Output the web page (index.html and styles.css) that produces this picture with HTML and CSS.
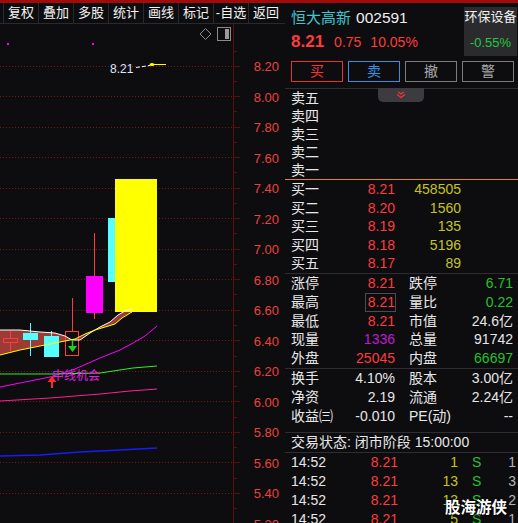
FILE: index.html
```html
<!DOCTYPE html>
<html lang="zh-CN">
<head>
<meta charset="utf-8">
<title>恒大高新 002591</title>
<link rel="stylesheet" href="styles.css">
</head>
<body>
<div class="topbar"></div>
<div class="main">
  <div class="left">
    <div class="toolbar">
      <div class="tb">复权</div><div class="tb">叠加</div><div class="tb">多股</div><div class="tb">统计</div><div class="tb">画线</div><div class="tb">标记</div><div class="tb">-自选</div><div class="tb">返回</div>
    </div>
    <div class="chart">
      <svg class="chart-svg" width="285" height="499" viewBox="0 24 285 499">
        <g class="grid" stroke="#7e1616" stroke-dasharray="1 2">
          <line x1="0" y1="66.5" x2="232" y2="66.5"/>
          <line x1="0" y1="96.5" x2="232" y2="96.5"/>
          <line x1="0" y1="127.5" x2="232" y2="127.5"/>
          <line x1="0" y1="157.5" x2="232" y2="157.5"/>
          <line x1="0" y1="188.5" x2="232" y2="188.5"/>
          <line x1="0" y1="218.5" x2="232" y2="218.5"/>
          <line x1="0" y1="249.5" x2="232" y2="249.5"/>
          <line x1="0" y1="279.5" x2="232" y2="279.5"/>
          <line x1="0" y1="310.5" x2="232" y2="310.5"/>
          <line x1="0" y1="340.5" x2="232" y2="340.5"/>
          <line x1="0" y1="371.5" x2="232" y2="371.5"/>
          <line x1="0" y1="401.5" x2="232" y2="401.5"/>
          <line x1="0" y1="432.5" x2="232" y2="432.5"/>
          <line x1="0" y1="462.5" x2="232" y2="462.5"/>
          <line x1="0" y1="493.5" x2="232" y2="493.5"/>
        </g>
        <g stroke="#5e0d0d">
          <line x1="233.5" y1="24" x2="233.5" y2="523"/>
          <line x1="233" y1="66.5" x2="240" y2="66.5"/><line x1="233" y1="96.5" x2="240" y2="96.5"/>
          <line x1="233" y1="127.5" x2="240" y2="127.5"/><line x1="233" y1="157.5" x2="240" y2="157.5"/>
          <line x1="233" y1="188.5" x2="240" y2="188.5"/><line x1="233" y1="218.5" x2="240" y2="218.5"/>
          <line x1="233" y1="249.5" x2="240" y2="249.5"/><line x1="233" y1="279.5" x2="240" y2="279.5"/>
          <line x1="233" y1="310.5" x2="240" y2="310.5"/><line x1="233" y1="340.5" x2="240" y2="340.5"/>
          <line x1="233" y1="371.5" x2="240" y2="371.5"/><line x1="233" y1="401.5" x2="240" y2="401.5"/>
          <line x1="233" y1="432.5" x2="240" y2="432.5"/><line x1="233" y1="462.5" x2="240" y2="462.5"/>
          <line x1="233" y1="493.5" x2="240" y2="493.5"/>
          <line x1="233" y1="51.5" x2="237" y2="51.5"/><line x1="233" y1="81.5" x2="237" y2="81.5"/>
          <line x1="233" y1="111.5" x2="237" y2="111.5"/><line x1="233" y1="142.5" x2="237" y2="142.5"/>
          <line x1="233" y1="172.5" x2="237" y2="172.5"/><line x1="233" y1="203.5" x2="237" y2="203.5"/>
          <line x1="233" y1="233.5" x2="237" y2="233.5"/><line x1="233" y1="264.5" x2="237" y2="264.5"/>
          <line x1="233" y1="294.5" x2="237" y2="294.5"/><line x1="233" y1="325.5" x2="237" y2="325.5"/>
          <line x1="233" y1="356.5" x2="237" y2="356.5"/><line x1="233" y1="386.5" x2="237" y2="386.5"/>
          <line x1="233" y1="417.5" x2="237" y2="417.5"/><line x1="233" y1="447.5" x2="237" y2="447.5"/>
          <line x1="233" y1="478.5" x2="237" y2="478.5"/><line x1="233" y1="508.5" x2="237" y2="508.5"/>
        </g>
        <g class="axis-labels" fill="#ea423c" font-size="13" text-anchor="end">
          <text x="279" y="71">8.20</text>
          <text x="279" y="101.5">8.00</text>
          <text x="279" y="132">7.80</text>
          <text x="279" y="162.5">7.60</text>
          <text x="279" y="193">7.40</text>
          <text x="279" y="223.5">7.20</text>
          <text x="279" y="254">7.00</text>
          <text x="279" y="284.5">6.80</text>
          <text x="279" y="315">6.60</text>
          <text x="279" y="345.5">6.40</text>
          <text x="279" y="376">6.20</text>
          <text x="279" y="406.5">6.00</text>
          <text x="279" y="437">5.80</text>
          <text x="279" y="467.5">5.60</text>
          <text x="279" y="498">5.40</text>
          <text x="279" y="528.5">5.20</text>
        </g>
        <!-- icons -->
        <rect x="7" y="43" width="2" height="2" fill="#ff00ff"/>
        <rect x="92" y="43" width="2" height="2" fill="#ff00ff"/>
        <polygon points="205.5,28.5 211,34 205.5,39.5 200,34" fill="none" stroke="#8a8a8a"/>
        <rect x="217.5" y="27.5" width="13" height="13" fill="none" stroke="#8a8a8a"/>
        <rect x="225" y="29" width="4" height="10" fill="#9a9a9a"/>
        <!-- last price marker -->
        <text x="110" y="73" font-size="12" fill="#dce6ff">8.21</text>
        <path d="M136 67.5 L150 65.5" stroke="#ffffff" stroke-dasharray="4 2"/>
        <ellipse cx="152" cy="64.5" rx="2.5" ry="1.6" fill="#ffff00"/>
        <line x1="154" y1="64.5" x2="166" y2="64.5" stroke="#ffff00"/>
        <!-- band fill -->
        <polygon fill="#9c3a35" points="0,330 20,330 40,332 55,333 65,336 72,340 80,340 90,333 100,327 110,322 118,315 125,311 132,309 132,312 122,318 115,324 105,327 95,330 85,334 75,339 65,341 55,343 40,346 20,350 0,355"/>
        <!-- candles -->
        <line x1="10.5" y1="331" x2="10.5" y2="351" stroke="#ff3c3c"/>
        <rect x="3.5" y="338.5" width="14" height="4" fill="#9c3a35" stroke="#ff3c3c"/>
        <line x1="30.5" y1="323" x2="30.5" y2="356" stroke="#55ffff"/>
        <rect x="23" y="333" width="15" height="7" fill="#55ffff"/>
        <line x1="51.5" y1="331" x2="51.5" y2="357" stroke="#55ffff"/>
        <rect x="44" y="336" width="15" height="21" fill="#55ffff"/>
        <line x1="72.5" y1="298" x2="72.5" y2="331" stroke="#ff3c3c"/>
        <rect x="65.5" y="331.5" width="13" height="24" fill="none" stroke="#ff3c3c"/>
        <line x1="94.5" y1="233" x2="94.5" y2="319" stroke="#ff3c3c"/>
        <rect x="86" y="276" width="17" height="37" fill="#ff00ff"/>
        <rect x="108" y="218" width="10" height="64" fill="#55ffff"/>
        <rect x="115" y="179" width="42" height="133" fill="#ffff00"/>
        <!-- moving averages -->
        <polyline fill="none" stroke="#ffffff" points="0,330 20,330 40,332 55,333 65,336 72,340 80,340 90,333 100,327 110,322 118,315 125,311 132,309"/>
        <polyline fill="none" stroke="#ffff00" points="0,355 20,350 40,346 55,343 65,341 75,339 85,334 95,330 105,327 115,324 122,318 132,312"/>
        <polyline fill="none" stroke="#ff00ff" points="0,387 25,382 50,377 75,369 100,358 120,350 133,343 145,336 157,326"/>
        <polyline fill="none" stroke="#33ee22" points="0,374 50,374 100,373 133,368 157,366"/>
        <polyline fill="none" stroke="#ff1f8f" points="0,401 50,398 100,394 130,391 157,389"/>
        <polyline fill="none" stroke="#1a1aff" stroke-width="1.3" points="0,456 40,455 80,452 120,450 157,448"/>
        <!-- signals -->
        <line x1="72.5" y1="340" x2="72.5" y2="346" stroke="#22d022" stroke-width="1.5"/>
        <polygon points="68,346 77,346 72.5,352" fill="#22d022"/>
        <text x="52" y="380" font-size="12" fill="#e020e0">中线机会</text>
        <polygon points="47.5,382 56.5,382 52,376" fill="#ff2a2a"/>
        <line x1="52" y1="381" x2="52" y2="388" stroke="#ff2a2a" stroke-width="2"/>
      </svg>
    </div>
  </div>

  <div class="right">
    <div class="head">
      <div class="head-info">
        <div class="title"><span class="name">恒大高新</span><span class="code">002591</span></div>
        <div class="quote"><span class="last">8.21</span><span class="chg">0.75</span><span class="pct">10.05%</span></div>
      </div>
      <div class="sector">
        <div class="sname">环保设备</div>
        <div class="schg">-0.55%</div>
      </div>
    </div>
    <div class="btns">
      <div class="btn buy-btn">买</div>
      <div class="btn sell-btn">卖</div>
      <div class="btn gray-btn">撤</div>
      <div class="btn gray-btn">警</div>
    </div>

    <div class="book sell">
      <div class="tab"><svg width="10" height="8" viewBox="0 0 10 8"><path d="M2 1 L5 3 L8 1" fill="none" stroke="#ff3030" stroke-width="1.2"/><path d="M1 3.5 L5 6.5 L9 3.5" fill="none" stroke="#ff3030" stroke-width="1.2"/></svg></div>
      <div class="row"><span class="lbl">卖五</span><span></span><span></span></div>
      <div class="row"><span class="lbl">卖四</span><span></span><span></span></div>
      <div class="row"><span class="lbl">卖三</span><span></span><span></span></div>
      <div class="row"><span class="lbl">卖二</span><span></span><span></span></div>
      <div class="row"><span class="lbl">卖一</span><span></span><span></span></div>
    </div>
    <div class="book buy">
      <div class="row"><span class="lbl">买一</span><span class="num red">8.21</span><span class="num vol">458505</span></div>
      <div class="row"><span class="lbl">买二</span><span class="num red">8.20</span><span class="num vol">1560</span></div>
      <div class="row"><span class="lbl">买三</span><span class="num red">8.19</span><span class="num vol">135</span></div>
      <div class="row"><span class="lbl">买四</span><span class="num red">8.18</span><span class="num vol">5196</span></div>
      <div class="row"><span class="lbl">买五</span><span class="num red">8.17</span><span class="num vol">89</span></div>
    </div>

    <div class="stats">
      <div class="srow"><span class="lbl">涨停</span><span class="num red">8.21</span><span class="lbl2">跌停</span><span class="num green">6.71</span></div>
      <div class="srow"><span class="lbl">最高</span><span class="num red"><span class="boxed">8.21</span></span><span class="lbl2">量比</span><span class="num green">0.22</span></div>
      <div class="srow"><span class="lbl">最低</span><span class="num red">8.21</span><span class="lbl2">市值</span><span class="num">24.6亿</span></div>
      <div class="srow"><span class="lbl">现量</span><span class="num purple">1336</span><span class="lbl2">总量</span><span class="num">91742</span></div>
      <div class="srow"><span class="lbl">外盘</span><span class="num red">25045</span><span class="lbl2">内盘</span><span class="num green">66697</span></div>
    </div>
    <div class="stats stats2">
      <div class="srow"><span class="lbl">换手</span><span class="num">4.10%</span><span class="lbl2">股本</span><span class="num">3.00亿</span></div>
      <div class="srow"><span class="lbl">净资</span><span class="num">2.19</span><span class="lbl2">流通</span><span class="num">2.24亿</span></div>
      <div class="srow"><span class="lbl">收益㈢</span><span class="num">-0.010</span><span class="lbl2">PE(动)</span><span class="num">--</span></div>
    </div>
    <div class="status">交易状态: 闭市阶段 15:00:00</div>
    <div class="ticks">
      <div class="trow"><span>14:52</span><span class="num red">8.21</span><span class="num vol">1</span><span class="side">S</span><span class="num cnt">1</span></div>
      <div class="trow"><span>14:52</span><span class="num red">8.21</span><span class="num vol">13</span><span class="side">S</span><span class="num cnt">3</span></div>
      <div class="trow"><span>14:52</span><span class="num red">8.21</span><span class="num vol">13</span><span class="side">S</span><span class="num cnt">2</span></div>
      <div class="trow"><span>14:52</span><span class="num red">8.21</span><span class="num vol">5</span><span class="side">S</span><span class="num cnt">1</span></div>
    </div>
  </div>
</div>
<div class="watermark">股海游侠</div>
</body>
</html>
```

FILE: styles.css
```css
* { box-sizing: border-box; margin: 0; padding: 0; }

html, body {
  width: 518px;
  height: 523px;
  overflow: hidden;
}

body {
  background: #0d0d10;
  font-family: "Liberation Sans", "Noto Sans CJK SC", sans-serif;
  color: #e6e6e6;
  position: relative;
}

.topbar {
  height: 3px;
  background: #a30b0b;
}

.main {
  display: flex;
  height: 520px;
}

/* ---------- left: chart ---------- */
.left {
  width: 285px;
  display: flex;
  flex-direction: column;
}

.toolbar {
  height: 21px;
  display: flex;
  padding-left: 3px;
  border-bottom: 1px solid #2a2a2e;
}

.tb {
  width: 35px;
  border-left: 1px solid #2a2a2e;
  font-size: 13px;
  line-height: 20px;
  text-align: center;
  color: #f2f2f2;
  white-space: nowrap;
}

.chart {
  flex: 1;
  overflow: hidden;
}

.chart-svg {
  display: block;
  font-family: "Liberation Sans", "Noto Sans CJK SC", sans-serif;
}

/* ---------- right: quote panel ---------- */
.right {
  width: 233px;
  overflow: hidden;
  font-size: 14px;
}

.head {
  display: flex;
  height: 58px;
  padding-left: 6px;
}

.head-info {
  flex: 1;
  padding-top: 5px;
}

.title {
  height: 20px;
  line-height: 20px;
  display: flex;
  align-items: baseline;
  gap: 5px;
  white-space: nowrap;
}

.name {
  color: #3ec6cf;
  font-size: 15px;
}

.code {
  color: #eeeeee;
  font-size: 15.5px;
}

.quote {
  margin-top: 4px;
  height: 20px;
  line-height: 20px;
  display: flex;
  align-items: baseline;
  color: #ff3b3b;
  font-size: 14px;
  white-space: nowrap;
}

.quote .last {
  font-size: 17px;
  font-weight: bold;
  margin-right: 10px;
}

.quote .chg {
  margin-right: 9px;
}

.sector {
  width: 53px;
  height: 49px;
  margin-top: 4px;
  margin-right: 1px;
  background: #2b2b2e;
  text-align: center;
  font-size: 13px;
  white-space: nowrap;
}

.sname {
  line-height: 20px;
  color: #f0f0f0;
}

.schg {
  margin-top: 6px;
  line-height: 20px;
  color: #22c844;
}

.btns {
  display: flex;
  gap: 5px;
  padding-left: 6px;
  height: 21px;
}

.btn {
  width: 52px;
  border: 1px solid #808080;
  text-align: center;
  line-height: 19px;
  font-size: 14px;
  color: #a8a8a8;
}

.buy-btn { border-color: #e83232; color: #ff3030; }
.sell-btn { border-color: #3a8ee0; color: #3a92e6; }
.gray-btn { border-color: #7c7c7c; color: #a8a8a8; }

.book {
  position: relative;
}

.sell {
  margin-top: 6px;
  border-top: 1px solid #2e2e32;
  border-bottom: 1px solid #e08a1e;
}

.tab {
  position: absolute;
  left: 93px;
  top: -1px;
  width: 46px;
  height: 14px;
  background: #3c3c40;
  border-radius: 0 0 5px 5px;
  display: flex;
  justify-content: center;
  align-items: center;
}

.tab svg { display: block; }

.row {
  display: grid;
  grid-template-columns: 50px 54px 66px;
  padding-left: 6px;
  height: 18px;
  line-height: 18px;
  white-space: nowrap;
}

.buy {
  border-bottom: 1px solid #2e2e32;
}

.buy .row {
  height: 18.6px;
  line-height: 18.6px;
}

.lbl { color: #e8e8e8; }

.num { text-align: right; }

.red { color: #ff3b3b; }
.green { color: #22c22a; }
.vol { color: #c4c41c; }
.purple { color: #c01ad0; }

.stats {
  border-bottom: 1px solid #2e2e32;
}

.srow {
  display: grid;
  grid-template-columns: 50px 54px 64px 54px;
  padding-left: 6px;
  height: 18.8px;
  line-height: 18.8px;
  white-space: nowrap;
}

.lbl2 {
  padding-left: 14px;
  color: #e8e8e8;
}

.boxed {
  display: inline-block;
  border: 1px solid #4c4c4c;
  line-height: 17px;
  padding-left: 2px;
  margin-right: -1px;
}

.stats2 {
  padding-bottom: 6px;
}

.stats2 .srow {
  height: 19px;
  line-height: 19px;
}

.status {
  height: 20px;
  line-height: 19px;
  padding-left: 6px;
  border-bottom: 1px solid #2e2e32;
  color: #e8e8e8;
  white-space: nowrap;
}

.trow {
  display: grid;
  grid-template-columns: 50px 57px 60px 22px 36px;
  padding-left: 6px;
  height: 19px;
  line-height: 19px;
  white-space: nowrap;
}

.side {
  padding-left: 14px;
  color: #22c22a;
}

.cnt { color: #b4b4b4; }

.watermark {
  position: absolute;
  left: 445px;
  top: 495px;
  font-size: 15.5px;
  font-weight: bold;
  color: #ffffff;
  text-shadow: 0 0 2px #000, 1px 1px 1px #000;
  white-space: nowrap;
}
```
